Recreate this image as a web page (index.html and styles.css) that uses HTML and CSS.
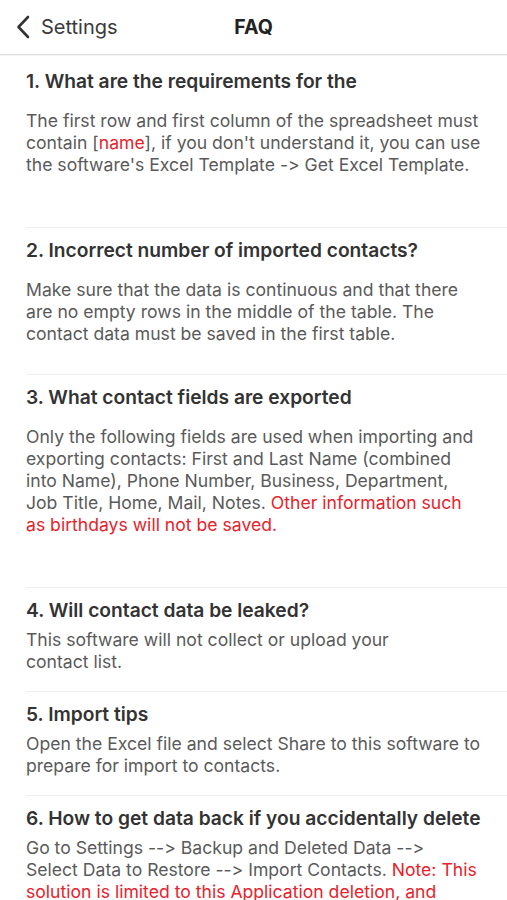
FILE: index.html
```html
<!DOCTYPE html>
<html lang="en">
<head>
<meta charset="utf-8">
<title>FAQ</title>
<link rel="stylesheet" href="styles.css">
</head>
<body>
<header class="nav">
  <a class="back" href="#">
    <svg class="chev" width="14" height="24" viewBox="0 0 14 24"><path d="M12 2 L2.5 12 L12 22" fill="none" stroke="#333" stroke-width="2.6" stroke-linecap="round" stroke-linejoin="round"/></svg>
    <span>Settings</span>
  </a>
  <h1 class="title">FAQ</h1>
</header>
<main class="list">
  <section class="item first roomy">
    <h2 class="q">1. What are the requirements for the</h2>
    <p class="a">The first row and first column of the spreadsheet must<br>contain [<span class="red">name</span>], if you don't understand it, you can use<br>the software's Excel Template -&gt; Get Excel Template.</p>
    <div class="blank"></div>
  </section>
  <section class="item roomy">
    <h2 class="q">2. Incorrect number of imported contacts?</h2>
    <p class="a">Make sure that the data is continuous and that there<br>are no empty rows in the middle of the table. The<br>contact data must be saved in the first table.</p>
  </section>
  <section class="item roomy">
    <h2 class="q">3. What contact fields are exported</h2>
    <p class="a">Only the following fields are used when importing and<br>exporting contacts: First and Last Name (combined<br>into Name), Phone Number, Business, Department,<br>Job Title, Home, Mail, Notes. <span class="red">Other information such<br>as birthdays will not be saved.</span></p>
    <div class="blank"></div>
  </section>
  <section class="item">
    <h2 class="q">4. Will contact data be leaked?</h2>
    <p class="a">This software will not collect or upload your<br>contact list.</p>
  </section>
  <section class="item">
    <h2 class="q">5. Import tips</h2>
    <p class="a">Open the Excel file and select Share to this software to<br>prepare for import to contacts.</p>
  </section>
  <section class="item">
    <h2 class="q">6. How to get data back if you accidentally delete</h2>
    <p class="a">Go to Settings --&gt; Backup and Deleted Data --&gt;<br>Select Data to Restore --&gt; Import Contacts. <span class="red">Note: This<br>solution is limited to this Application deletion, and</span></p>
  </section>
</main>
</body>
</html>
```
FILE: styles.css
```css
html, body {
  margin: 0;
  padding: 0;
  background: #fff;
}
body {
  font-family: Inter, "Noto Sans", sans-serif;
  font-variant-ligatures: none;
  font-feature-settings: "calt" 0, "liga" 0;
  width: 507px;
  height: 900px;
  overflow: hidden;
  color: #333;
}
.nav {
  height: 54px;
  display: grid;
  grid-template-columns: 1fr auto 1fr;
  align-items: center;
  border-bottom: 1px solid #dedede;
  box-shadow: 0 1px 1px rgba(0,0,0,0.04);
}
.back {
  grid-column: 1;
  display: flex;
  align-items: center;
  gap: 11px;
  padding-left: 16px;
  color: #3a3a3a;
  text-decoration: none;
  font-size: 20px;
  font-weight: 400;
}
.chev { display: block; }
.title {
  grid-column: 2;
  margin: 0;
  font-size: 19.5px;
  font-weight: 700;
  color: #222;
}
.list {
  padding-left: 26px;
}
.item {
  border-top: 1px solid #efefef;
  padding: 10px 0 18px;
}
.item.first {
  border-top: none;
  padding-top: 14px;
}
.item.roomy { padding-bottom: 29px; }
.q {
  margin: 0;
  font-size: 19.2px;
  line-height: 24px;
  font-weight: 600;
  color: #333;
  white-space: nowrap;
}
.a {
  margin: 7px 0 0;
  font-size: 17.6px;
  line-height: 22px;
  color: #5a5a5a;
  white-space: nowrap;
}
.roomy .a { margin-top: 17px; }
.blank { height: 22px; }
.red { color: #e8212b; }
```
